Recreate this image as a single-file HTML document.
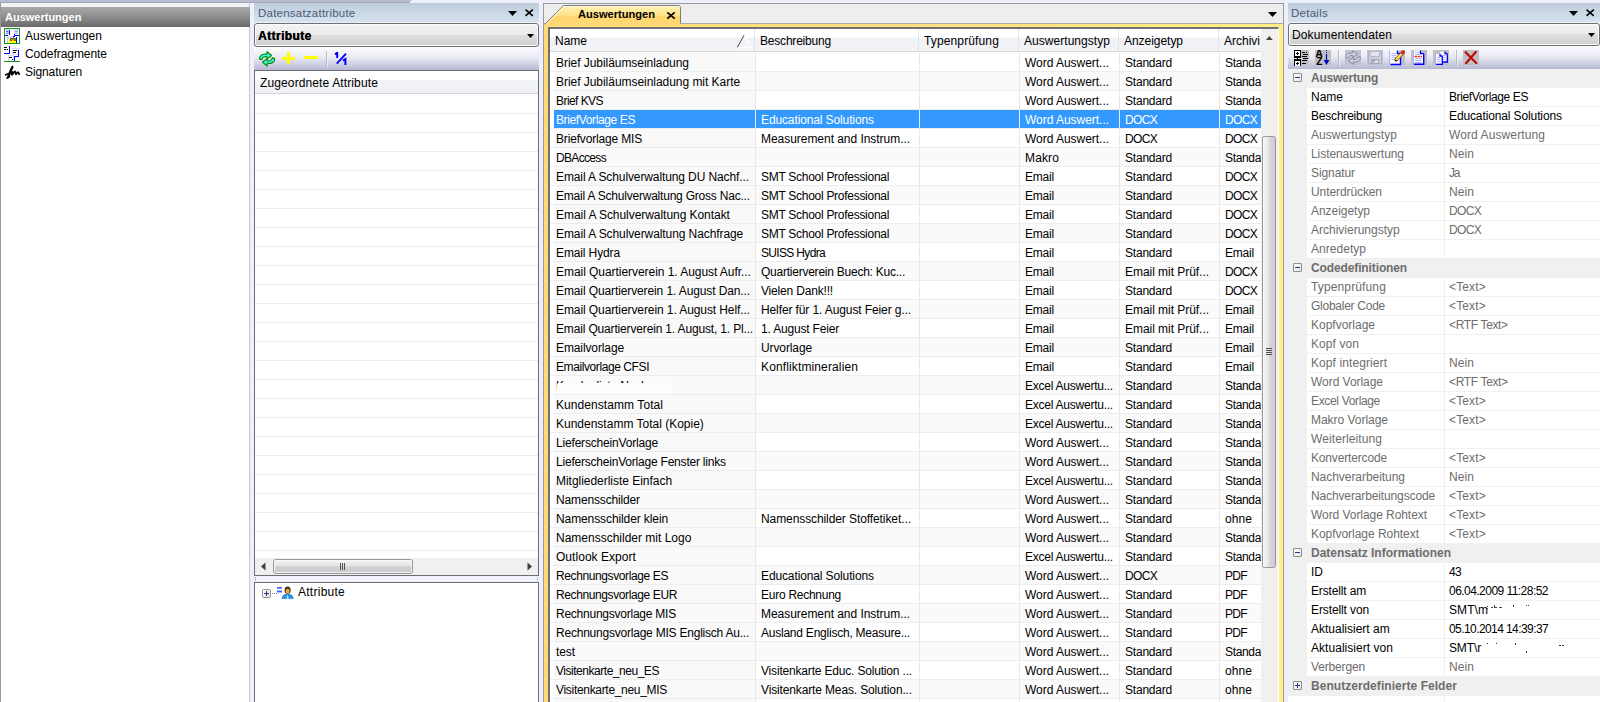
<!DOCTYPE html>
<html lang="de">
<head>
<meta charset="utf-8">
<title>Auswertungen</title>
<style>
*{box-sizing:border-box}
html,body{margin:0;padding:0}
body{width:1600px;height:702px;overflow:hidden;position:relative;background:#edeffb;font-family:"Liberation Sans",sans-serif;font-size:12px;color:#000;line-height:19px}
.abs{position:absolute}
i{font-style:normal}
/* top strip */
#topstrip{left:0;top:0;width:412px;height:3px;background:#b9bbd0;border-bottom:1px solid #a3a5bb;clip-path:polygon(0 0,412px 0,409px 3px,0 3px)}
/* left nav panel */
#nav{left:0;top:3px;width:250px;height:699px;background:#fff;border-left:1px solid #999;border-right:1px solid #c9c9c9}
#nav .top{position:absolute;left:0;top:0;width:248px;height:4px;background:#f2f2f2}
#nav .hd{position:absolute;left:0;top:4px;width:249px;height:20px;background:linear-gradient(#a9a9a9,#8f8f8f 45%,#6a6a6a);color:#fff;font-weight:bold;font-size:11px;line-height:20px;padding-left:4px}
#nav .it{position:absolute;left:24px;height:18px;line-height:18px;white-space:nowrap}
#nav svg{position:absolute;left:3px}
/* dock panel header */
.dh{height:19px;background:linear-gradient(#bfccda,#d6e2ef);color:#4b5a76;line-height:21px;padding-left:4px;overflow:hidden;white-space:nowrap}
.tri{position:absolute;width:9px;height:5px;background:#000;clip-path:polygon(0 0,100% 0,50% 100%)}
.combo{border:1px solid #707070;border-radius:3px;background:linear-gradient(#f3f3f3,#ebebeb 49%,#dedede 50%,#cfcfcf);box-shadow:inset 0 0 0 1px #fcfcfc;height:24px;line-height:24px;padding-left:3px;white-space:nowrap}
.combo .tri{width:7px;height:4px}
.tb{background:linear-gradient(#fdfdff,#e9eaf4 45%,#c9cbe0 80%,#b7b9d2)}
.sep{position:absolute;width:1px;background:#b9bbcd;box-shadow:1px 0 0 rgba(255,255,255,.45)}
/* datensatz panel */
#ds{left:254px;top:3px;width:285px;height:699px}
#dslist{left:0;top:67px;width:285px;height:506px;border:1px solid #6e6e6e;background:#fff;overflow:hidden;background-image:linear-gradient(#ededed,#ededed);background-size:100% 1px;background-repeat:no-repeat}
#dslist .lh{position:absolute;left:0;top:0;width:283px;height:23px;background:linear-gradient(#fff,#fff 40%,#f3f4f8 42%,#f0f1f5);border-bottom:1px solid #d5d5d5;line-height:24px;padding-left:5px}
#dslist .ln{position:absolute;left:0;width:283px;height:1px;background:#ececec}
#dslist .sb{position:absolute;left:0;top:487px;width:283px;height:17px;background:#f0f0f0}
#dstree{left:0;top:579px;width:285px;height:125px;border:1px solid #6e6e6e;background:#fff}
/* center */
#ctr{left:543px;top:3px;width:741px;height:699px}
#tabstrip{left:0;top:0;width:741px;height:21px;background:#eeeeee;border:1px solid #9a9a9a;border-bottom:1px solid #a8a8a8}
#yframe{left:0;top:21px;width:741px;height:690px;background:linear-gradient(to right,#ffdb78,#ffe080 50%,#ffef86);border:1px solid #9a9a9a;border-top:none}
#grid{left:5px;top:24px;width:731px;height:690px;border:2px solid #727272;border-right:1px solid #fff;background:#fff;overflow:hidden}
#ghead{position:absolute;left:0;top:0;width:711px;height:23px;background:linear-gradient(#fff,#fff 38%,#f0f1f5 40%,#f3f4f8);border-bottom:1px solid #d8d8d8}
#ghead>span{position:absolute;top:0;height:22px;line-height:24px;padding-left:5px;border-right:1px solid #e3e4e8;white-space:nowrap;overflow:hidden}
#gbody{position:absolute;left:0;top:24px;width:711px}
.r{position:relative;height:19px;border-bottom:1px solid #ededed;white-space:nowrap}
.c{position:absolute;top:0;height:18px;line-height:20px;padding-left:5px;overflow:hidden;border-right:1px solid #e8e8e8}
.c1{left:4px;width:202px;padding-left:2px}
.c2{left:206px;width:164px}
.c3{left:370px;width:100px}
.c4{left:470px;width:100px}
.c5{left:570px;width:100px}
.c6{left:670px;width:41px;border-right:none}
.r:nth-child(even) .c{background:#fafafa}
.c1{background:#f9f9f9}
.r.sel .c{background:#3399ff;color:#fff;border-right-color:#e9eef5}
.erase{position:absolute;left:3px;top:7px;width:116px;height:11px;background:#fdfdfd;border-radius:2px 6px 6px 2px}
#vsb{position:absolute;left:711px;top:0;width:17px;height:700px;background:#f0f0f0}
/* details */
#dt{left:1288px;top:3px;width:312px;height:699px}
#pg{left:0;top:66px;width:312px;height:640px;background:#f0f0f0;overflow:hidden}
.pc{position:relative;height:19px;line-height:18px;padding-left:23px;color:#6d6d6d;white-space:nowrap}
.bx{position:absolute;left:5px;top:4px;width:9px;height:9px;border:1px solid #8e8e8e;border-radius:1px;background:linear-gradient(135deg,#fff,#e4e4e4)}
.bx .h{position:absolute;left:1px;top:3px;width:5px;height:1px;background:#27348b}
.bx .v{position:absolute;left:3px;top:1px;width:1px;height:5px;background:#27348b}
.pr{position:relative;height:19px;margin-left:19px;background:#fff;border-bottom:1px solid #f0f0f0;white-space:nowrap;line-height:18px}
.pr.g{color:#6d6d6d}
.pn{position:absolute;left:0;top:0;width:138px;height:18px;padding-left:4px;border-right:1px solid #f0f0f0;overflow:hidden}
.pv{position:absolute;left:138px;top:0;padding-left:4px;height:18px}
</style>
</head>
<body>
<div id="topstrip" class="abs"></div>

<!-- left navigation -->
<div id="nav" class="abs">
  <div class="top"></div>
  <div class="hd">Auswertungen</div>
  
  <svg style="top:25px" width="16" height="16" viewBox="0 0 16 16" shape-rendering="crispEdges">
    <rect x="0.5" y="0.5" width="15" height="15" fill="#fff" stroke="#14941a"/>
    <rect x="2" y="1" width="3" height="5" fill="#c8ccff"/><rect x="5" y="2" width="1" height="5" fill="#0000ff"/><rect x="1" y="7" width="3" height="1" fill="#0000ff"/>
    <rect x="2" y="3" width="2" height="1" fill="#5a62e8"/><rect x="2" y="5" width="2" height="1" fill="#8a90f0"/>
    <rect x="10" y="1" width="4" height="5" fill="#d4d7ff"/><rect x="10" y="6" width="1" height="3" fill="#0000ff"/><rect x="11" y="7" width="4" height="1" fill="#0000ff"/>
    <rect x="11" y="3" width="3" height="1" fill="#9da2f3"/><rect x="11" y="5" width="3" height="1" fill="#b5b9f6"/>
    <rect x="4" y="8" width="5" height="3" fill="#d8dbff"/><rect x="3" y="9" width="1" height="6" fill="#c5c9ff"/>
    <rect x="12" y="9" width="1" height="6" fill="#0000ff"/><rect x="9" y="8" width="1" height="2" fill="#3a3af0"/>
    <rect x="5" y="11" width="7" height="4" fill="#ffff00"/>
    <rect x="6" y="10" width="6" height="3" fill="#a05a10"/><rect x="7" y="11" width="4" height="1" fill="#38b838"/><rect x="8" y="12" width="2" height="1" fill="#e8c020"/>
  </svg>
  <svg style="top:43px" width="16" height="16" viewBox="0 0 16 16" shape-rendering="crispEdges">
    <rect x="0" y="1" width="3" height="1" fill="#000"/><rect x="0" y="3" width="2" height="1" fill="#000"/><rect x="3" y="3" width="1" height="1" fill="#000"/>
    <rect x="5" y="0" width="1" height="8" fill="#0000ff"/><rect x="0" y="7" width="5" height="1" fill="#0000ff"/>
    <rect x="8" y="2" width="7" height="7" fill="#d5d8ff"/><rect x="9" y="3" width="5" height="5" fill="#fff"/>
    <rect x="9" y="4" width="4" height="1" fill="#000"/><rect x="9" y="6" width="3" height="1" fill="#000"/>
    <rect x="14" y="4" width="1" height="7" fill="#0000ff"/><rect x="10" y="10" width="5" height="1" fill="#0000ff"/>
    <rect x="4" y="9" width="6" height="6" fill="#d5d8ff"/><rect x="5" y="10" width="4" height="5" fill="#fff"/>
    <rect x="5" y="11" width="3" height="1" fill="#000"/><rect x="8" y="13" width="1" height="1" fill="#000"/>
    <rect x="10" y="11" width="1" height="4" fill="#0000ff"/>
    <rect x="0" y="15" width="16" height="1" fill="#14941a"/>
  </svg>
  <svg style="top:62px" width="17" height="15" viewBox="0 0 17 15">
    <path d="M8.400 2C7 4.600 5.600 8 4 12.400" stroke="#000" stroke-width="2.300" fill="none" stroke-linecap="round"/>
    <path d="M1.600 9.800C3.800 9 6.400 7.800 8.200 6.600C7.600 8.200 7.200 9.600 7.800 9.800C8.800 10 9.800 6.400 11 6.400C11.800 6.400 11.200 9.400 12 9.400C12.800 9.400 13 7 13.800 7C14.400 7 14.600 8.400 15.200 9.200M3 13L5.600 11.600" stroke="#000" stroke-width="1.700" fill="none" stroke-linecap="round" stroke-linejoin="round"/>
  </svg>
  <div class="it" style="top:24px"><span style="letter-spacing:0.02px;">Auswertungen</span></div>
  <div class="it" style="top:42px"><span style="letter-spacing:-0.06px;">Codefragmente</span></div>
  <div class="it" style="top:60px"><span style="letter-spacing:-0.10px;">Signaturen</span></div>
</div>

<!-- Datensatzattribute -->
<div id="ds" class="abs">
  <div class="dh abs" style="left:0;top:0;width:285px"><span style="letter-spacing:0.23px;font-size:11.5px;">Datensatzattribute</span>
    <i class="tri" style="left:254px;top:8px"></i>
    <svg class="abs" style="left:271px;top:6px" width="9" height="8" viewBox="0 0 9 8"><path d="M0.500 0.600L7.800 6.800M7.800 0.600L0.500 6.800" stroke="#000" stroke-width="1.600" fill="none"/></svg>
  </div>
  <div class="combo abs" style="left:0;top:20px;width:285px;font-weight:bold;text-shadow:0.35px 0 0 #000"><span style="letter-spacing:0.39px;">Attribute</span><i class="tri" style="left:272px;top:10px"></i></div>
  <div class="tb abs" style="left:0;top:44px;width:285px;height:23px">
    <i class="sep" style="left:72px;top:4px;height:17px"></i>
    <svg class="abs" style="left:4px;top:3px" width="18" height="18" viewBox="0 0 18 18">
      <path d="M1.600 9.200C1.200 5.600 4 3.900 9 4.200L9 1.700L13.600 5.400L9 9L9 6.700C6 6.500 4.200 7.300 3.900 9.600Z" fill="#3ff8f8" stroke="#0f9410" stroke-width="1.300" stroke-linejoin="round"/>
      <path d="M16.600 8.400C17 12 14.200 13.700 9.200 13.400L9.200 15.900L4.600 12.200L9.200 8.600L9.200 10.900C12.200 11.100 14 10.300 14.300 8Z" fill="#3ff8f8" stroke="#0f9410" stroke-width="1.300" stroke-linejoin="round"/>
    </svg>
    <svg class="abs" style="left:28px;top:5px" width="13" height="12" viewBox="0 0 13 12" shape-rendering="crispEdges"><rect x="0" y="5" width="13" height="2.5" fill="#ffff00"/><rect x="5" y="0" width="3" height="12" fill="#ffff00"/></svg>
    <svg class="abs" style="left:50px;top:9px" width="14" height="3" viewBox="0 0 14 3" shape-rendering="crispEdges"><rect x="0" y="0" width="14" height="3" fill="#ffff00"/></svg>
    <svg class="abs" style="left:80px;top:5px" width="14" height="14" viewBox="0 0 14 14">
      <path d="M1 2.4L3.2 0.8L3.2 6" stroke="#0000ff" stroke-width="2" fill="none"/>
      <path d="M12 1.6L2.8 11.6" stroke="#0000ff" stroke-width="1.8" fill="none"/>
      <path d="M9 8.6L11.4 7L11.4 13" stroke="#0000ff" stroke-width="2" fill="none"/>
    </svg>

  </div>
  <div id="dslist" class="abs">
    <div class="lh"><span style="letter-spacing:0.12px;">Zugeordnete Attribute</span></div>
    <div class="ln" style="top:42px"></div><div class="ln" style="top:61px"></div><div class="ln" style="top:80px"></div><div class="ln" style="top:99px"></div><div class="ln" style="top:118px"></div><div class="ln" style="top:137px"></div><div class="ln" style="top:156px"></div><div class="ln" style="top:175px"></div><div class="ln" style="top:194px"></div><div class="ln" style="top:213px"></div><div class="ln" style="top:232px"></div><div class="ln" style="top:251px"></div><div class="ln" style="top:270px"></div><div class="ln" style="top:289px"></div><div class="ln" style="top:308px"></div><div class="ln" style="top:327px"></div><div class="ln" style="top:346px"></div><div class="ln" style="top:365px"></div><div class="ln" style="top:384px"></div><div class="ln" style="top:403px"></div><div class="ln" style="top:422px"></div><div class="ln" style="top:441px"></div><div class="ln" style="top:460px"></div><div class="ln" style="top:479px"></div>
    <div class="sb">
      <svg class="abs" style="left:0;top:0" width="283" height="17" viewBox="0 0 283 17">
        <path d="M10.5 4.5L10.5 12.5L6 8.5Z" fill="#404040"/>
        <path d="M272.5 4.5L272.5 12.5L277 8.5Z" fill="#404040"/>
        <defs><linearGradient id="hth" x1="0" y1="0" x2="0" y2="1"><stop offset="0" stop-color="#f4f4f4"/><stop offset="0.45" stop-color="#e6e6e8"/><stop offset="0.5" stop-color="#d4d4d8"/><stop offset="1" stop-color="#c6c6cc"/></linearGradient></defs>
        <rect x="18.5" y="1.5" width="139" height="14" rx="2" fill="url(#hth)" stroke="#979797"/>
        <rect x="19.5" y="2.5" width="137" height="12" rx="1" fill="none" stroke="#fafafa" stroke-opacity="0.8"/>
        <path d="M85.5 5V12M87.5 5V12M89.5 5V12" stroke="#505050" stroke-width="1"/>
      </svg>
    </div>
  </div>
  <div class="abs" style="left:1px;top:574px;width:283px;height:4px;border-left:1px solid #b9bccf;border-right:1px solid #b9bccf;background:#f4f5fc"></div>
  <div id="dstree" class="abs">
    <svg class="abs" style="left:7px;top:3px" width="36" height="15" viewBox="0 0 36 15">
      <defs><linearGradient id="bxg" x1="0" y1="0" x2="1" y2="1"><stop offset="0" stop-color="#fff"/><stop offset="1" stop-color="#dcdcdc"/></linearGradient></defs>
      <rect x="0.5" y="3.5" width="8" height="8" rx="1" fill="url(#bxg)" stroke="#919191"/>
      <path d="M2 7.5H7M4.5 5V10" stroke="#27348b" stroke-width="1"/>
      <path d="M10 7.5H11M12 7.5H13M14 7.5H15" stroke="#808080" stroke-width="1"/>
      <rect x="15" y="1" width="5" height="1.6" fill="#3a5cff"/><rect x="15" y="4.6" width="5" height="1.8" fill="#3a5cff"/>
      <path d="M20 12.6C20 9.4 23 8 25.6 8C28.2 8 31.2 9.4 31.2 12.6Z" fill="#2a93e6" stroke="#1a6fc0" stroke-width="0.6"/>
      <path d="M25.6 8.2L24.6 12.4H26.6Z" fill="#d8ecff"/>
      <ellipse cx="25.6" cy="4.2" rx="3" ry="3.6" fill="#3a2a1a"/>
      <ellipse cx="25.6" cy="5" rx="2" ry="2.6" fill="#f2a62a"/>
    </svg>
    <span class="abs" style="left:43px;top:0;line-height:19px"><span style="letter-spacing:0.26px;">Attribute</span></span>
  </div>
</div>

<!-- center -->
<div id="ctr" class="abs">
  <div id="tabstrip" class="abs"><i class="tri" style="left:724px;top:8px"></i></div>
  <div id="yframe" class="abs"></div>
  <svg class="abs" style="left:0;top:0;z-index:3" width="142" height="24" viewBox="0 0 142 24">
    <defs><linearGradient id="tabg" x1="0" y1="0" x2="0" y2="1"><stop offset="0" stop-color="#fff4c0"/><stop offset="0.12" stop-color="#ffeeaa"/><stop offset="0.44" stop-color="#ffe38a"/><stop offset="0.52" stop-color="#ffd56e"/><stop offset="1" stop-color="#ffdb7a"/></linearGradient></defs>
    <path d="M1 24L1 21.5L20.2 2.5L135.5 2.5Q137.5 2.5 137.5 4.5L137.5 21L137.5 24Z" fill="url(#tabg)"/>
    <path d="M1.5 21.5L20.4 2.5L135.5 2.5Q137.5 2.5 137.5 4.5L137.5 20.5" fill="none" stroke="#7d7d7d" stroke-width="1"/>
    <path d="M3 21.4L20.9 3.5L135.5 3.5Q136.5 3.5 136.5 4.5" fill="none" stroke="#fffbe8" stroke-width="1"/>
    <text x="35" y="14.6" font-family="Liberation Sans, sans-serif" font-weight="bold" font-size="11px" fill="#000" textLength="77" lengthAdjust="spacingAndGlyphs">Auswertungen</text>
    <path d="M124.3 9.3L131.7 15.7M131.7 9.3L124.3 15.7" stroke="#000" stroke-width="1.7" fill="none"/>
  </svg>
  
  <div id="grid" class="abs">
    <div id="ghead">
      <span style="left:0;width:205px"><span>Name</span><svg style="position:absolute;left:185px;top:4px" width="18" height="17" viewBox="0 0 18 17"><path d="M2 14.500L16 14.500L9.300 2.500" fill="none" stroke="#fff" stroke-width="1.300"/><path d="M2.300 14.300L9 2.300" stroke="#4a4a4a" stroke-width="1" fill="none"/></svg></span>
      <span style="left:205px;width:164px"><span style="letter-spacing:-0.20px;">Beschreibung</span></span>
      <span style="left:369px;width:100px"><span style="letter-spacing:0.13px;">Typenprüfung</span></span>
      <span style="left:469px;width:100px"><span style="letter-spacing:0.04px;">Auswertungstyp</span></span>
      <span style="left:569px;width:100px"><span style="letter-spacing:-0.04px;">Anzeigetyp</span></span>
      <span style="left:669px;width:42px;border-right:none"><span>Archivi</span></span>
    </div>
    <div id="gbody">
<div class="r"><span class="c c1" style="letter-spacing:-0.05px">Brief Jubiläumseinladung</span><span class="c c2"></span><span class="c c3"></span><span class="c c4" style="letter-spacing:-0.03px">Word Auswert...</span><span class="c c5" style="letter-spacing:-0.21px">Standard</span><span class="c c6" style="letter-spacing:-0.34px">Standa</span></div>
<div class="r"><span class="c c1" style="letter-spacing:-0.04px">Brief Jubiläumseinladung mit Karte</span><span class="c c2"></span><span class="c c3"></span><span class="c c4" style="letter-spacing:-0.03px">Word Auswert...</span><span class="c c5" style="letter-spacing:-0.21px">Standard</span><span class="c c6" style="letter-spacing:-0.34px">Standa</span></div>
<div class="r"><span class="c c1" style="letter-spacing:-0.56px">Brief KVS</span><span class="c c2"></span><span class="c c3"></span><span class="c c4" style="letter-spacing:-0.03px">Word Auswert...</span><span class="c c5" style="letter-spacing:-0.21px">Standard</span><span class="c c6" style="letter-spacing:-0.34px">Standa</span></div>
<div class="r sel"><span class="c c1" style="letter-spacing:-0.38px">BriefVorlage ES</span><span class="c c2" style="letter-spacing:-0.12px">Educational Solutions</span><span class="c c3"></span><span class="c c4" style="letter-spacing:-0.03px">Word Auswert...</span><span class="c c5" style="letter-spacing:-0.67px">DOCX</span><span class="c c6" style="letter-spacing:-0.67px">DOCX</span></div>
<div class="r"><span class="c c1" style="letter-spacing:-0.17px">Briefvorlage MIS</span><span class="c c2" style="letter-spacing:-0.04px">Measurement and Instrum...</span><span class="c c3"></span><span class="c c4" style="letter-spacing:-0.03px">Word Auswert...</span><span class="c c5" style="letter-spacing:-0.67px">DOCX</span><span class="c c6" style="letter-spacing:-0.67px">DOCX</span></div>
<div class="r"><span class="c c1" style="letter-spacing:-0.67px">DBAccess</span><span class="c c2"></span><span class="c c3"></span><span class="c c4" style="letter-spacing:0.13px">Makro</span><span class="c c5" style="letter-spacing:-0.21px">Standard</span><span class="c c6" style="letter-spacing:-0.34px">Standa</span></div>
<div class="r"><span class="c c1" style="letter-spacing:-0.11px">Email A Schulverwaltung DU Nachf...</span><span class="c c2" style="letter-spacing:-0.28px">SMT School Professional</span><span class="c c3"></span><span class="c c4" style="letter-spacing:-0.20px">Email</span><span class="c c5" style="letter-spacing:-0.21px">Standard</span><span class="c c6" style="letter-spacing:-0.67px">DOCX</span></div>
<div class="r"><span class="c c1" style="letter-spacing:-0.21px">Email A Schulverwaltung Gross Nac...</span><span class="c c2" style="letter-spacing:-0.28px">SMT School Professional</span><span class="c c3"></span><span class="c c4" style="letter-spacing:-0.20px">Email</span><span class="c c5" style="letter-spacing:-0.21px">Standard</span><span class="c c6" style="letter-spacing:-0.67px">DOCX</span></div>
<div class="r"><span class="c c1" style="letter-spacing:-0.05px">Email A Schulverwaltung Kontakt</span><span class="c c2" style="letter-spacing:-0.28px">SMT School Professional</span><span class="c c3"></span><span class="c c4" style="letter-spacing:-0.20px">Email</span><span class="c c5" style="letter-spacing:-0.21px">Standard</span><span class="c c6" style="letter-spacing:-0.67px">DOCX</span></div>
<div class="r"><span class="c c1" style="letter-spacing:-0.09px">Email A Schulverwaltung Nachfrage</span><span class="c c2" style="letter-spacing:-0.28px">SMT School Professional</span><span class="c c3"></span><span class="c c4" style="letter-spacing:-0.20px">Email</span><span class="c c5" style="letter-spacing:-0.21px">Standard</span><span class="c c6" style="letter-spacing:-0.67px">DOCX</span></div>
<div class="r"><span class="c c1" style="letter-spacing:-0.12px">Email Hydra</span><span class="c c2" style="letter-spacing:-0.67px">SUISS Hydra</span><span class="c c3"></span><span class="c c4" style="letter-spacing:-0.20px">Email</span><span class="c c5" style="letter-spacing:-0.21px">Standard</span><span class="c c6" style="letter-spacing:-0.20px">Email</span></div>
<div class="r"><span class="c c1" style="letter-spacing:-0.05px">Email Quartierverein 1. August Aufr...</span><span class="c c2" style="letter-spacing:-0.24px">Quartierverein Buech: Kuc...</span><span class="c c3"></span><span class="c c4" style="letter-spacing:-0.20px">Email</span><span class="c c5" style="letter-spacing:-0.04px">Email mit Prüf...</span><span class="c c6" style="letter-spacing:-0.67px">DOCX</span></div>
<div class="r"><span class="c c1" style="letter-spacing:-0.11px">Email Quartierverein 1. August Dan...</span><span class="c c2" style="letter-spacing:-0.18px">Vielen Dank!!!</span><span class="c c3"></span><span class="c c4" style="letter-spacing:-0.20px">Email</span><span class="c c5" style="letter-spacing:-0.21px">Standard</span><span class="c c6" style="letter-spacing:-0.67px">DOCX</span></div>
<div class="r"><span class="c c1" style="letter-spacing:-0.09px">Email Quartierverein 1. August Helf...</span><span class="c c2" style="letter-spacing:-0.11px">Helfer für 1. August Feier g...</span><span class="c c3"></span><span class="c c4" style="letter-spacing:-0.20px">Email</span><span class="c c5" style="letter-spacing:-0.04px">Email mit Prüf...</span><span class="c c6" style="letter-spacing:-0.20px">Email</span></div>
<div class="r"><span class="c c1" style="letter-spacing:-0.16px">Email Quartierverein 1. August, 1. Pl...</span><span class="c c2" style="letter-spacing:-0.18px">1. August Feier</span><span class="c c3"></span><span class="c c4" style="letter-spacing:-0.20px">Email</span><span class="c c5" style="letter-spacing:-0.04px">Email mit Prüf...</span><span class="c c6" style="letter-spacing:-0.20px">Email</span></div>
<div class="r"><span class="c c1" style="letter-spacing:-0.11px">Emailvorlage</span><span class="c c2" style="letter-spacing:-0.11px">Urvorlage</span><span class="c c3"></span><span class="c c4" style="letter-spacing:-0.20px">Email</span><span class="c c5" style="letter-spacing:-0.21px">Standard</span><span class="c c6" style="letter-spacing:-0.20px">Email</span></div>
<div class="r"><span class="c c1" style="letter-spacing:-0.41px">Emailvorlage CFSI</span><span class="c c2" style="letter-spacing:0.13px">Konfliktmineralien</span><span class="c c3"></span><span class="c c4" style="letter-spacing:-0.20px">Email</span><span class="c c5" style="letter-spacing:-0.21px">Standard</span><span class="c c6" style="letter-spacing:-0.20px">Email</span></div>
<div class="r"><span class="c c1" style="letter-spacing:-0.16px">Kundenliste Nach...<i class="erase"></i></span><span class="c c2"></span><span class="c c3"></span><span class="c c4" style="letter-spacing:-0.24px">Excel Auswertu...</span><span class="c c5" style="letter-spacing:-0.21px">Standard</span><span class="c c6" style="letter-spacing:-0.34px">Standa</span></div>
<div class="r"><span class="c c1" style="letter-spacing:0.07px">Kundenstamm Total</span><span class="c c2"></span><span class="c c3"></span><span class="c c4" style="letter-spacing:-0.24px">Excel Auswertu...</span><span class="c c5" style="letter-spacing:-0.21px">Standard</span><span class="c c6" style="letter-spacing:-0.34px">Standa</span></div>
<div class="r"><span class="c c1">Kundenstamm Total (Kopie)</span><span class="c c2"></span><span class="c c3"></span><span class="c c4" style="letter-spacing:-0.24px">Excel Auswertu...</span><span class="c c5" style="letter-spacing:-0.21px">Standard</span><span class="c c6" style="letter-spacing:-0.34px">Standa</span></div>
<div class="r"><span class="c c1" style="letter-spacing:-0.18px">LieferscheinVorlage</span><span class="c c2"></span><span class="c c3"></span><span class="c c4" style="letter-spacing:-0.03px">Word Auswert...</span><span class="c c5" style="letter-spacing:-0.21px">Standard</span><span class="c c6" style="letter-spacing:-0.34px">Standa</span></div>
<div class="r"><span class="c c1" style="letter-spacing:-0.21px">LieferscheinVorlage Fenster links</span><span class="c c2"></span><span class="c c3"></span><span class="c c4" style="letter-spacing:-0.03px">Word Auswert...</span><span class="c c5" style="letter-spacing:-0.21px">Standard</span><span class="c c6" style="letter-spacing:-0.34px">Standa</span></div>
<div class="r"><span class="c c1" style="letter-spacing:-0.03px">Mitgliederliste Einfach</span><span class="c c2"></span><span class="c c3"></span><span class="c c4" style="letter-spacing:-0.24px">Excel Auswertu...</span><span class="c c5" style="letter-spacing:-0.21px">Standard</span><span class="c c6" style="letter-spacing:-0.34px">Standa</span></div>
<div class="r"><span class="c c1" style="letter-spacing:-0.15px">Namensschilder</span><span class="c c2"></span><span class="c c3"></span><span class="c c4" style="letter-spacing:-0.03px">Word Auswert...</span><span class="c c5" style="letter-spacing:-0.21px">Standard</span><span class="c c6" style="letter-spacing:-0.34px">Standa</span></div>
<div class="r"><span class="c c1" style="letter-spacing:-0.10px">Namensschilder klein</span><span class="c c2" style="letter-spacing:-0.09px">Namensschilder Stoffetiket...</span><span class="c c3"></span><span class="c c4" style="letter-spacing:-0.03px">Word Auswert...</span><span class="c c5" style="letter-spacing:-0.21px">Standard</span><span class="c c6" style="letter-spacing:0.07px">ohne</span></div>
<div class="r"><span class="c c1">Namensschilder mit Logo</span><span class="c c2"></span><span class="c c3"></span><span class="c c4" style="letter-spacing:-0.03px">Word Auswert...</span><span class="c c5" style="letter-spacing:-0.21px">Standard</span><span class="c c6" style="letter-spacing:-0.34px">Standa</span></div>
<div class="r"><span class="c c1" style="letter-spacing:0.04px">Outlook Export</span><span class="c c2"></span><span class="c c3"></span><span class="c c4" style="letter-spacing:-0.24px">Excel Auswertu...</span><span class="c c5" style="letter-spacing:-0.21px">Standard</span><span class="c c6" style="letter-spacing:-0.34px">Standa</span></div>
<div class="r"><span class="c c1" style="letter-spacing:-0.39px">Rechnungsvorlage ES</span><span class="c c2" style="letter-spacing:-0.12px">Educational Solutions</span><span class="c c3"></span><span class="c c4" style="letter-spacing:-0.03px">Word Auswert...</span><span class="c c5" style="letter-spacing:-0.67px">DOCX</span><span class="c c6" style="letter-spacing:-0.67px">PDF</span></div>
<div class="r"><span class="c c1" style="letter-spacing:-0.39px">Rechnungsvorlage EUR</span><span class="c c2" style="letter-spacing:-0.26px">Euro Rechnung</span><span class="c c3"></span><span class="c c4" style="letter-spacing:-0.03px">Word Auswert...</span><span class="c c5" style="letter-spacing:-0.21px">Standard</span><span class="c c6" style="letter-spacing:-0.67px">PDF</span></div>
<div class="r"><span class="c c1" style="letter-spacing:-0.24px">Rechnungsvorlage MIS</span><span class="c c2" style="letter-spacing:-0.04px">Measurement and Instrum...</span><span class="c c3"></span><span class="c c4" style="letter-spacing:-0.03px">Word Auswert...</span><span class="c c5" style="letter-spacing:-0.21px">Standard</span><span class="c c6" style="letter-spacing:-0.67px">PDF</span></div>
<div class="r"><span class="c c1" style="letter-spacing:-0.22px">Rechnungsvorlage MIS Englisch Au...</span><span class="c c2" style="letter-spacing:-0.23px">Ausland Englisch, Measure...</span><span class="c c3"></span><span class="c c4" style="letter-spacing:-0.03px">Word Auswert...</span><span class="c c5" style="letter-spacing:-0.21px">Standard</span><span class="c c6" style="letter-spacing:-0.67px">PDF</span></div>
<div class="r"><span class="c c1" style="letter-spacing:-0.09px">test</span><span class="c c2"></span><span class="c c3"></span><span class="c c4" style="letter-spacing:-0.03px">Word Auswert...</span><span class="c c5" style="letter-spacing:-0.21px">Standard</span><span class="c c6" style="letter-spacing:-0.34px">Standa</span></div>
<div class="r"><span class="c c1" style="letter-spacing:-0.47px">Visitenkarte_neu_ES</span><span class="c c2" style="letter-spacing:-0.18px">Visitenkarte Educ. Solution ...</span><span class="c c3"></span><span class="c c4" style="letter-spacing:-0.03px">Word Auswert...</span><span class="c c5" style="letter-spacing:-0.21px">Standard</span><span class="c c6" style="letter-spacing:0.07px">ohne</span></div>
<div class="r"><span class="c c1" style="letter-spacing:-0.31px">Visitenkarte_neu_MIS</span><span class="c c2" style="letter-spacing:-0.14px">Visitenkarte Meas. Solution...</span><span class="c c3"></span><span class="c c4" style="letter-spacing:-0.03px">Word Auswert...</span><span class="c c5" style="letter-spacing:-0.21px">Standard</span><span class="c c6" style="letter-spacing:0.07px">ohne</span></div>
<div class="r"><span class="c c1"></span><span class="c c2"></span><span class="c c3"></span><span class="c c4"></span><span class="c c5"></span><span class="c c6"></span></div>
    </div>
    <div id="vsb">
      <svg class="abs" style="left:0;top:0" width="17" height="674" viewBox="0 0 17 674">
        <defs><linearGradient id="vth" x1="0" y1="0" x2="1" y2="0"><stop offset="0" stop-color="#f5f5f5"/><stop offset="0.45" stop-color="#e9e9eb"/><stop offset="0.5" stop-color="#d9d9dc"/><stop offset="1" stop-color="#cbcbd0"/></linearGradient></defs>
        <path d="M4.800 11L8.300 7L11.800 11Z" fill="#484848"/>
        <rect x="1.5" y="107.500" width="13" height="431" rx="2" fill="url(#vth)" stroke="#979797"/>
        <path d="M2.500 109V537" stroke="#fbfbfb" stroke-opacity="0.9" fill="none"/>
        <path d="M5 319.5H11M5 321.5H11M5 323.5H11M5 325.5H11" stroke="#505050" stroke-width="1"/>
      </svg>
    </div>
  </div>
</div>

<!-- details -->
<div id="dt" class="abs">
  <div class="dh abs" style="left:0;top:0;width:312px;padding-left:3px"><span style="letter-spacing:0.26px;font-size:11.5px;">Details</span>
    <i class="tri" style="left:281px;top:8px"></i>
    <svg class="abs" style="left:298px;top:6px" width="9" height="8" viewBox="0 0 9 8"><path d="M0.500 0.600L7.800 6.800M7.800 0.600L0.500 6.800" stroke="#000" stroke-width="1.600" fill="none"/></svg>
  </div>
  <div class="combo abs" style="left:0;top:20px;width:312px;height:23px;line-height:23px"><span style="letter-spacing:0.13px;">Dokumentendaten</span><i class="tri" style="left:299px;top:9px"></i></div>
  <div class="tb abs" style="left:0;top:43px;width:312px;height:23px">
    
    <svg class="abs" style="left:5px;top:4px" width="16" height="16" viewBox="0 0 16 16" shape-rendering="crispEdges">
      <rect x="8" y="0" width="8" height="15" fill="#c0c0c0"/>
      <rect x="1" y="0" width="7" height="8" fill="#000"/><rect x="2" y="1" width="5" height="5" fill="#fff"/>
      <rect x="3" y="3" width="3" height="1" fill="#000"/><rect x="4" y="2" width="1" height="3" fill="#000"/>
      <rect x="4" y="8" width="1" height="2" fill="#000"/>
      <rect x="1" y="9" width="7" height="7" fill="#000"/><rect x="2" y="11" width="5" height="5" fill="#fff"/>
      <rect x="3" y="13" width="3" height="1" fill="#000"/><rect x="4" y="12" width="1" height="3" fill="#000"/>
      <rect x="9" y="2" width="3" height="1" fill="#000"/><rect x="13" y="2" width="1" height="1" fill="#000"/>
      <rect x="10" y="4" width="5" height="1" fill="#000"/><rect x="9" y="6" width="5" height="1" fill="#000"/>
      <rect x="10" y="8" width="5" height="1" fill="#000"/><rect x="9" y="10" width="5" height="1" fill="#000"/><rect x="9" y="13" width="4" height="1" fill="#000"/>
    </svg>
    <svg class="abs" style="left:27px;top:4px" width="16" height="16" viewBox="0 0 16 16">
      <rect x="0" y="0" width="16" height="15" fill="#c0c0c0"/>
      <text x="0.6" y="7.2" font-family="Liberation Sans, sans-serif" font-weight="bold" font-size="10px" fill="#000">A</text>
      <text x="1.2" y="15.2" font-family="Liberation Sans, sans-serif" font-weight="bold" font-size="10px" fill="#000">Z</text>
      <path d="M11.5 0V1M11.5 2V3" stroke="#0000c0" stroke-width="1"/>
      <path d="M11.5 4V11" stroke="#0000c0" stroke-width="1.2"/>
      <path d="M8.6 10L14.4 10L11.5 15Z" fill="#0000c0"/>
    </svg>
    <svg class="abs" style="left:57px;top:4px" width="16" height="16" viewBox="0 0 16 16">
      <rect x="0" y="0" width="16" height="15" fill="#c2c3ce"/>
      <path d="M0.600 7.800C0.200 4.400 3 2.800 7.800 3L7.800 0.700L12.400 4.200L7.800 7.700L7.800 5.500C5 5.300 3.200 6.100 2.900 8.200Z" fill="#d0d3e0" stroke="#8489a4" stroke-width="1" stroke-linejoin="round"/>
      <path d="M15.400 7.200C15.800 10.600 13 12.200 8.200 12L8.200 14.300L3.600 10.800L8.200 7.300L8.200 9.500C11 9.700 12.800 8.900 13.100 6.800Z" fill="#d0d3e0" stroke="#8489a4" stroke-width="1" stroke-linejoin="round"/>
    </svg>
    <svg class="abs" style="left:79px;top:4px" width="16" height="16" viewBox="0 0 16 16">
      <rect x="0" y="0" width="16" height="15" fill="#c2c3ce"/>
      <rect x="1.5" y="1.5" width="13" height="12" fill="#cfd0dc" stroke="#aeb0c4"/>
      <rect x="3.5" y="1.5" width="9" height="5" fill="#e4e5ee" stroke="#b8bacb"/>
      <rect x="4.500" y="9.500" width="7" height="4" fill="#dcdde8" stroke="#a2a4ba"/>
      <path d="M5 12.5L8 10" stroke="#8f92aa" stroke-width="1.2"/>
    </svg>
    <svg class="abs" style="left:101px;top:4px" width="17" height="16" viewBox="0 0 17 16">
      <rect x="10" y="0" width="6" height="15" fill="#c0c0c0"/>
      <path d="M1 0.500L8.500 0.500L11 3L11 13.500L1 13.500Z" fill="#fff"/>
      <path d="M1.5 14.500L11.500 14.500L11.500 3.500M8.500 0.500L8.500 3.500L11.500 3.500" fill="none" stroke="#0000ff" stroke-width="1.4"/>
      <path d="M0.700 0.500L0.700 14" stroke="#a9aeff" stroke-width="1"/>
      <path d="M2.500 3.500H7M2.500 5.500H7.500M2.500 7.500H7M2.500 9.500H6" stroke="#b5b9ff" stroke-width="1"/>
      <path d="M7.200 9.800L14.200 2.200" stroke="#7a5a10" stroke-width="3.600" stroke-linecap="round"/>
      <path d="M7.400 9.600L13.000 3.500" stroke="#ffe25a" stroke-width="2.200" stroke-linecap="round"/>
      <path d="M13.300 3.200L14.500 1.900" stroke="#e02020" stroke-width="2.600" stroke-linecap="round"/>
      <path d="M6 11.200L6.400 9.200L8 10.600Z" fill="#000"/>
    </svg>
    <svg class="abs" style="left:123px;top:4px" width="16" height="16" viewBox="0 0 16 16">
      <rect x="0" y="0" width="16" height="15" fill="#c0c0c0"/>
      <path d="M2.500 0.500L9.500 0.500L12.500 3.500L12.500 13.500L2.500 13.500Z" fill="#fff"/>
      <path d="M3 14.300L12.700 14.300L12.700 3.500M9.500 0.500L9.500 3.500L12.500 3.500" fill="none" stroke="#0000ff" stroke-width="1.400"/>
      <path d="M2.500 0.500L2.500 14" stroke="#a9aeff" stroke-width="1"/>
      <path d="M4 2.500H8.500M4 4.500H9.500M4 8.500H10.500M4 10.500H10.500M4 12.500H10.500" stroke="#aeb3ff" stroke-width="1"/>
      <path d="M3.500 6.500H11" stroke="#e02020" stroke-width="1.300"/>
      <path d="M6 6.500H7M9 6.500H10" stroke="#ffd84a" stroke-width="1.300"/>
    </svg>
    <svg class="abs" style="left:145px;top:4px" width="16" height="16" viewBox="0 0 16 16">
      <rect x="0" y="0" width="16" height="15" fill="#c0c0c0"/>
      <path d="M7.500 1.500L12 1.500L14 3.500L14 11.500L7.500 11.500Z" fill="#fff"/>
      <path d="M8 12L14.300 12L14.300 3.500M12 1.500L12 3.500L14 3.500" fill="none" stroke="#0000ff" stroke-width="1.300"/>
      <path d="M9 5.500H12.500M9 7.500H12.500M9 9.500H12.500" stroke="#aeb3ff" stroke-width="1"/>
      <path d="M2.500 4L7 4L9 6L9 13.500L2.500 13.500Z" fill="#fff"/>
      <path d="M3 14.300L9.300 14.300L9.300 6M7 4L7 6L9 6" fill="none" stroke="#0000ff" stroke-width="1.300"/>
      <path d="M2.500 4L2.500 14" stroke="#a9aeff" stroke-width="1"/>
      <path d="M4 7.500H7.500M4 9.500H7.500M4 11.500H7.500" stroke="#aeb3ff" stroke-width="1"/>
    </svg>
    <svg class="abs" style="left:175px;top:4px" width="16" height="16" viewBox="0 0 16 16">
      <rect x="0" y="0" width="16" height="15" fill="#c0c0c0"/>
      <path d="M2.600 2.200L13.200 13M12.800 2L3 13.200" stroke="#c00a0a" stroke-width="2.200" stroke-linecap="round" fill="none"/>
    </svg>
    <i class="sep" style="left:50px;top:4px;height:17px"></i>
    <i class="sep" style="left:168px;top:4px;height:17px"></i>
  </div>
  <div id="pg" class="abs">
<div class="pc"><span class="bx"><i class="h"></i></span><b style="letter-spacing:-0.23px">Auswertung</b></div>
<div class="pr b"><span class="pn">Name</span><span class="pv" style="letter-spacing:-0.38px">BriefVorlage ES</span></div>
<div class="pr b"><span class="pn" style="letter-spacing:-0.20px">Beschreibung</span><span class="pv" style="letter-spacing:-0.12px">Educational Solutions</span></div>
<div class="pr g"><span class="pn" style="letter-spacing:0.04px">Auswertungstyp</span><span class="pv" style="letter-spacing:0.10px">Word Auswertung</span></div>
<div class="pr g"><span class="pn" style="letter-spacing:-0.07px">Listenauswertung</span><span class="pv" style="letter-spacing:0.08px">Nein</span></div>
<div class="pr g"><span class="pn" style="letter-spacing:-0.09px">Signatur</span><span class="pv" style="letter-spacing:-1.34px">Ja</span></div>
<div class="pr g"><span class="pn" style="letter-spacing:-0.09px">Unterdrücken</span><span class="pv" style="letter-spacing:0.08px">Nein</span></div>
<div class="pr g"><span class="pn" style="letter-spacing:-0.04px">Anzeigetyp</span><span class="pv" style="letter-spacing:-0.67px">DOCX</span></div>
<div class="pr g"><span class="pn">Archivierungstyp</span><span class="pv" style="letter-spacing:-0.67px">DOCX</span></div>
<div class="pr g"><span class="pn" style="letter-spacing:0.03px">Anredetyp</span><span class="pv"></span></div>
<div class="pc"><span class="bx"><i class="h"></i></span><b style="letter-spacing:-0.12px">Codedefinitionen</b></div>
<div class="pr g"><span class="pn" style="letter-spacing:0.13px">Typenprüfung</span><span class="pv" style="letter-spacing:0.13px">&lt;Text&gt;</span></div>
<div class="pr g"><span class="pn" style="letter-spacing:-0.26px">Globaler Code</span><span class="pv" style="letter-spacing:0.13px">&lt;Text&gt;</span></div>
<div class="pr g"><span class="pn">Kopfvorlage</span><span class="pv" style="letter-spacing:-0.35px">&lt;RTF Text&gt;</span></div>
<div class="pr g"><span class="pn" style="letter-spacing:0.08px">Kopf von</span><span class="pv"></span></div>
<div class="pr g"><span class="pn" style="letter-spacing:0.09px">Kopf integriert</span><span class="pv" style="letter-spacing:0.08px">Nein</span></div>
<div class="pr g"><span class="pn" style="letter-spacing:-0.04px">Word Vorlage</span><span class="pv" style="letter-spacing:-0.35px">&lt;RTF Text&gt;</span></div>
<div class="pr g"><span class="pn" style="letter-spacing:-0.34px">Excel Vorlage</span><span class="pv" style="letter-spacing:0.13px">&lt;Text&gt;</span></div>
<div class="pr g"><span class="pn" style="letter-spacing:-0.03px">Makro Vorlage</span><span class="pv" style="letter-spacing:0.13px">&lt;Text&gt;</span></div>
<div class="pr g"><span class="pn" style="letter-spacing:0.09px">Weiterleitung</span><span class="pv"></span></div>
<div class="pr g"><span class="pn" style="letter-spacing:-0.16px">Konvertercode</span><span class="pv" style="letter-spacing:0.13px">&lt;Text&gt;</span></div>
<div class="pr g"><span class="pn" style="letter-spacing:-0.05px">Nachverarbeitung</span><span class="pv" style="letter-spacing:0.08px">Nein</span></div>
<div class="pr g"><span class="pn" style="letter-spacing:-0.13px">Nachverarbeitungscode</span><span class="pv" style="letter-spacing:0.13px">&lt;Text&gt;</span></div>
<div class="pr g"><span class="pn" style="letter-spacing:-0.06px">Word Vorlage Rohtext</span><span class="pv" style="letter-spacing:0.13px">&lt;Text&gt;</span></div>
<div class="pr g"><span class="pn" style="letter-spacing:-0.04px">Kopfvorlage Rohtext</span><span class="pv" style="letter-spacing:0.13px">&lt;Text&gt;</span></div>
<div class="pc"><span class="bx"><i class="h"></i></span><b>Datensatz Informationen</b></div>
<div class="pr b"><span class="pn">ID</span><span class="pv" style="letter-spacing:-0.68px">43</span></div>
<div class="pr b"><span class="pn" style="letter-spacing:-0.15px">Erstellt am</span><span class="pv" style="letter-spacing:-0.54px">06.04.2009 11:28:52</span></div>
<div class="pr b"><span class="pn" style="letter-spacing:-0.11px">Erstellt von</span><span class="pv" style="letter-spacing:0.07px">SMT\m<svg style="position:absolute;left:40px;top:4px" width="60" height="10" viewBox="0 0 60 10" shape-rendering="crispEdges"><path d="M2 1h1M2 3h1M6 2h2M9 0v3M10 2h2M14 2h3M28 0v2M41 0h1M43 0h1" stroke="#444" stroke-width="1" fill="none"/></svg></span></div>
<div class="pr b"><span class="pn">Aktualisiert am</span><span class="pv" style="letter-spacing:-0.58px">05.10.2014 14:39:37</span></div>
<div class="pr b"><span class="pn" style="letter-spacing:0.04px">Aktualisiert von</span><span class="pv" style="letter-spacing:-0.13px">SMT\r<svg style="position:absolute;left:38px;top:3px" width="90" height="12" viewBox="0 0 90 12" shape-rendering="crispEdges"><path d="M4 1h1M13 1h1M32 1v2M43 9v2M76 3h2M79 3h2" stroke="#333" stroke-width="1" fill="none"/></svg></span></div>
<div class="pr g"><span class="pn" style="letter-spacing:-0.15px">Verbergen</span><span class="pv" style="letter-spacing:0.08px">Nein</span></div>
<div class="pc"><span class="bx"><i class="h"></i><i class="v"></i></span><b style="letter-spacing:0.05px">Benutzerdefinierte Felder</b></div>
<div class="pr" style="margin-left:0;height:30px"><span class="pn" style="width:157px;height:30px"></span></div>
  </div>
</div>
</body>
</html>
